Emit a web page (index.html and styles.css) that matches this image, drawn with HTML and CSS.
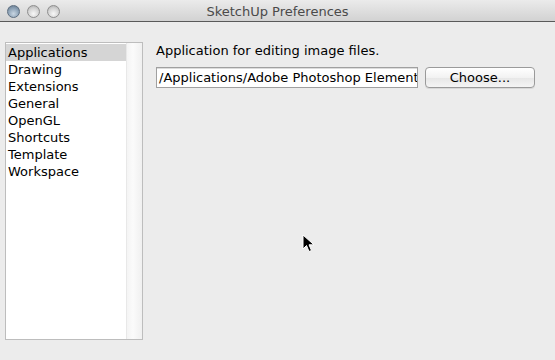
FILE: index.html
```html
<!DOCTYPE html>
<html>
<head>
<meta charset="utf-8">
<link rel="stylesheet" href="styles.css">
</head>
<body>
<div class="window">
  <div class="titlebar">
    <div class="lights">
      <span class="light close"></span>
      <span class="light"></span>
      <span class="light"></span>
    </div>
    <div class="title">SketchUp Preferences</div>
  </div>
  <div class="content">
    <div class="sidebar">
      <ul class="list">
        <li class="selected">Applications</li>
        <li>Drawing</li>
        <li>Extensions</li>
        <li>General</li>
        <li>OpenGL</li>
        <li>Shortcuts</li>
        <li>Template</li>
        <li>Workspace</li>
      </ul>
      <div class="gutter"></div>
    </div>
    <div class="panel">
      <div class="label">Application for editing image files.</div>
      <div class="row">
        <div class="field"><span class="field-text">/Applications/Adobe Photoshop Elements</span></div>
        <button class="btn">Choose...</button>
      </div>
    </div>
  </div>
  <svg class="cursor" width="14" height="20" viewBox="0 0 14 20">
    <path d="M1 1 L1 15 L4.5 11.5 L7 17.5 L9.5 16.5 L7 10.8 L12 10.8 Z" fill="#000" stroke="#fff" stroke-width="1"/>
  </svg>
</div>
</body>
</html>
```

FILE: styles.css
```css
html, body {
  margin: 0;
  padding: 0;
}
body {
  width: 555px;
  height: 360px;
  overflow: hidden;
  background: #ececec;
  font-family: "DejaVu Sans", "Lucida Grande", sans-serif;
}
.window {
  position: relative;
  width: 555px;
  height: 360px;
  background: #ececec;
}
.titlebar {
  position: relative;
  height: 21px;
  background: linear-gradient(#ebebeb, #d2d2d2);
  border-bottom: 1px solid #5a5a5a;
  display: flex;
  align-items: center;
}
.lights {
  display: flex;
  gap: 7px;
  padding-left: 7px;
  padding-top: 1px;
}
.light {
  width: 13px;
  height: 13px;
  border-radius: 50%;
  box-sizing: border-box;
  border: 1px solid #8e8e8e;
  background: radial-gradient(circle at 50% 70%, #f8f8f8 0%, #d4d4d4 55%, #a8a8a8 100%);
}
.light.close {
  border-color: #5d6e80;
  background: radial-gradient(circle at 50% 70%, #c9d6e2 0%, #8ea3b7 55%, #5e7287 100%);
}
.title {
  position: absolute;
  left: 0;
  right: 0;
  top: 0;
  height: 21px;
  line-height: 23px;
  text-align: center;
  font-size: 13px;
  color: #4a4a4a;
  pointer-events: none;
}
.content {
  display: flex;
  padding: 20px 0 0 5px;
}
.sidebar {
  width: 136px;
  height: 296px;
  border: 1px solid #bdbdbd;
  background: #fff;
  display: flex;
}
.list {
  list-style: none;
  margin: 0;
  padding: 1px 0 0 0;
  width: 121px;
}
.list li {
  font-size: 13px;
  height: 17px;
  line-height: 17px;
  padding-left: 2px;
  color: #000;
}
.list li.selected {
  background: #d5d5d5;
}
.gutter {
  width: 15px;
  border-left: 1px solid #e8e8e8;
  background: linear-gradient(to right, #f4f4f4, #fbfbfb 40%, #f0f0f0);
}
.panel {
  padding-left: 13px;
  padding-top: 0;
}
.label {
  font-size: 13px;
  color: #000;
  line-height: 17px;
}
.row {
  display: flex;
  align-items: center;
  margin-top: 8px;
}
.field {
  width: 258px;
  height: 19px;
  border: 1px solid #a0a0a0;
  background: #fff;
  font-size: 13px;
  line-height: 19px;
  padding-left: 2px;
  white-space: nowrap;
  overflow: hidden;
  box-shadow: inset 0 1px 0 #dcdcdc;
}
.btn {
  margin-left: 7px;
  width: 110px;
  height: 21px;
  border: 1px solid #9a9a9a;
  border-radius: 4px;
  background: linear-gradient(#ffffff, #f2f2f2 50%, #e6e6e6 51%, #f4f4f4);
  font-family: "DejaVu Sans", sans-serif;
  font-size: 13px;
  color: #000;
  padding: 0;
  box-shadow: 0 1px 0 #d8d8d8;
}
.cursor {
  position: absolute;
  left: 302px;
  top: 234px;
}
```
